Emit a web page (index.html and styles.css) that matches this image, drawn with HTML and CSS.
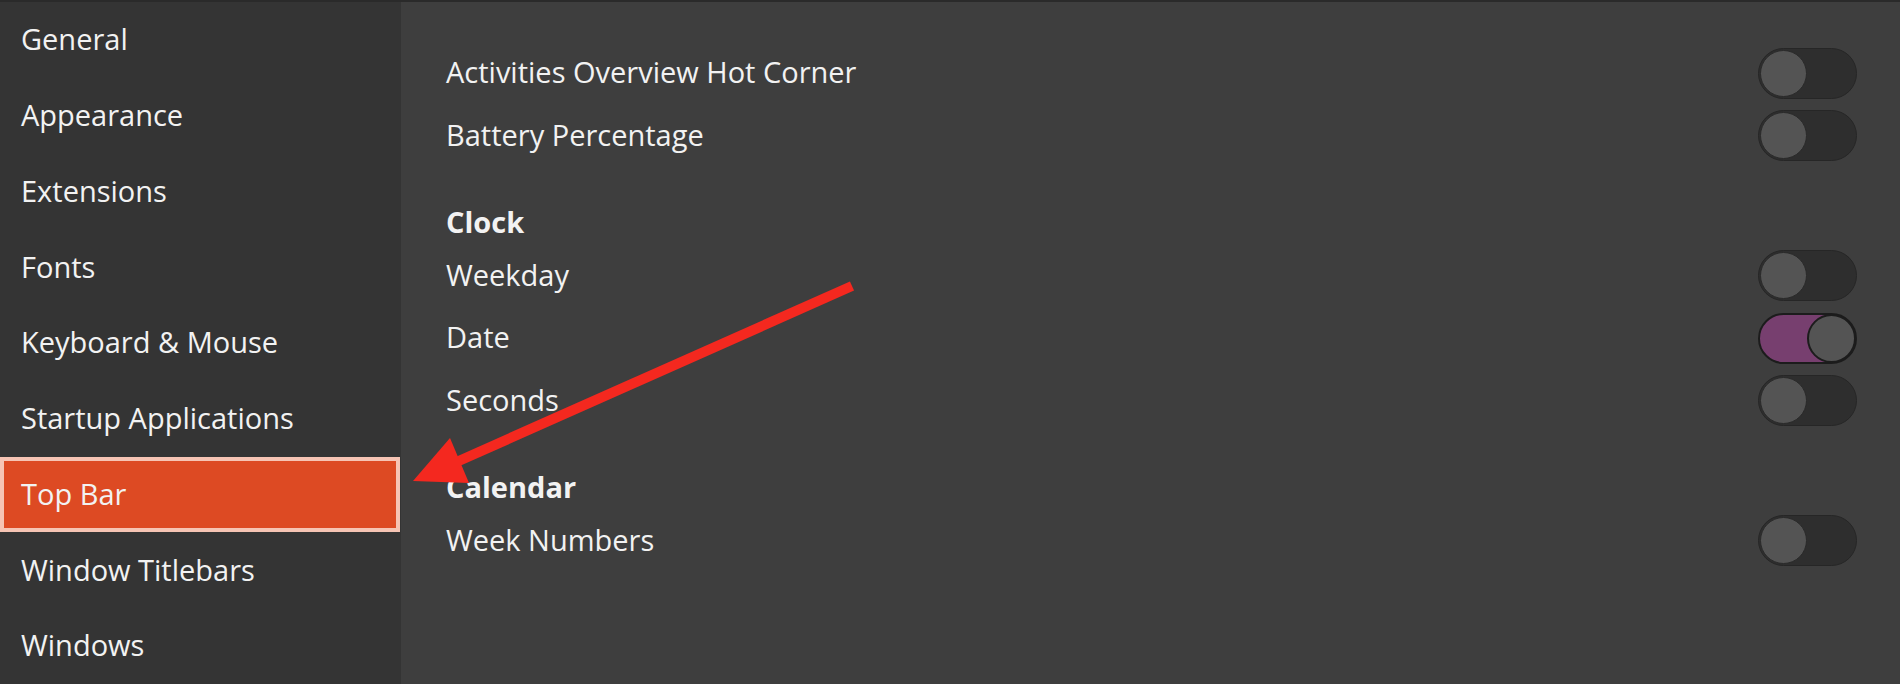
FILE: index.html
```html
<!DOCTYPE html>
<html lang="en">
  <head>
    <meta charset="UTF-8" />
    <meta name="viewport" content="width=device-width, initial-scale=1.0" />
    <title>Tweaks - Top Bar</title>
    <link rel="stylesheet" href="styles.css">
  </head>
  <body>
    <div class="window">
      <nav class="sidebar">
        <div class="nav-item">General</div>
        <div class="nav-item">Appearance</div>
        <div class="nav-item">Extensions</div>
        <div class="nav-item">Fonts</div>
        <div class="nav-item">Keyboard &amp; Mouse</div>
        <div class="nav-item">Startup Applications</div>
        <div class="nav-item selected">Top Bar</div>
        <div class="nav-item">Window Titlebars</div>
        <div class="nav-item">Windows</div>
      </nav>

      <main class="content">
        <div class="group">
          <div class="row">
            <span class="label">Activities Overview Hot Corner</span>
            <div class="switch"><div class="knob"></div></div>
          </div>
          <div class="row">
            <span class="label">Battery Percentage</span>
            <div class="switch"><div class="knob"></div></div>
          </div>
        </div>

        <div class="group">
          <div class="section-title">Clock</div>
          <div class="row">
            <span class="label">Weekday</span>
            <div class="switch"><div class="knob"></div></div>
          </div>
          <div class="row">
            <span class="label">Date</span>
            <div class="switch on"><div class="knob"></div></div>
          </div>
          <div class="row">
            <span class="label">Seconds</span>
            <div class="switch"><div class="knob"></div></div>
          </div>
        </div>

        <div class="group">
          <div class="section-title">Calendar</div>
          <div class="row">
            <span class="label">Week Numbers</span>
            <div class="switch"><div class="knob"></div></div>
          </div>
        </div>
      </main>
    </div>

    <!-- annotation arrow drawn over the screenshot -->
    <svg class="arrow" width="1900" height="684" viewBox="0 0 1900 684">
      <line x1="852" y1="286" x2="452" y2="464" stroke="#f4281f" stroke-width="10" />
      <polygon points="450,438 413,481 469,483" fill="#f4281f" />
    </svg>
  </body>
</html>
```

FILE: styles.css
```css
body {
  margin: 0;
  background: #3e3e3e;
  font-family: "Open Sans", "Noto Sans", sans-serif;
  font-size: 29px;
  color: #f2f2f2;
  overflow: hidden;
}
.window {
  display: flex;
  height: 684px;
  border-top: 2px solid #2a2a2a;
  box-sizing: border-box;
}
.sidebar {
  width: 401px;
  flex-shrink: 0;
  background: #343434;
  display: flex;
  flex-direction: column;
}
.nav-item {
  height: 75.75px;
  box-sizing: border-box;
  display: flex;
  align-items: center;
  padding-left: 17px;
  padding-bottom: 2px;
  width: 400px;
  border: 4px solid transparent;
  white-space: nowrap;
}
.nav-item.selected {
  background: #dd4a23;
  border-color: #f6c4b4;
}
.content {
  flex: 1;
  padding: 40px 43px 0 45px;
}
.group + .group {
  margin-top: 33.5px;
}
.section-title {
  height: 44px;
  display: flex;
  align-items: center;
  padding-bottom: 2px;
  box-sizing: border-box;
  font-weight: bold;
}
.row {
  height: 62.5px;
  display: flex;
  align-items: center;
  justify-content: space-between;
}
.label {
  padding-bottom: 3px;
}
.switch {
  width: 99px;
  height: 51px;
  box-sizing: border-box;
  border: 1px solid #262626;
  border-radius: 26px;
  background: #2e2e2e;
  display: flex;
  align-items: center;
  padding: 0 1px;
}
.knob {
  width: 47px;
  height: 47px;
  box-sizing: border-box;
  border-radius: 50%;
  background: #545454;
  border: 1px solid #2a2a2a;
}
.switch.on {
  background: #773f6f;
  border: 2px solid #1c1c1c;
  justify-content: flex-end;
  padding: 0;
}
.switch.on .knob {
  border: 2px solid #1c1c1c;
  width: 49px;
  height: 49px;
  margin-right: -1px;
}
.arrow {
  position: absolute;
  left: 0;
  top: 0;
  pointer-events: none;
}
```
